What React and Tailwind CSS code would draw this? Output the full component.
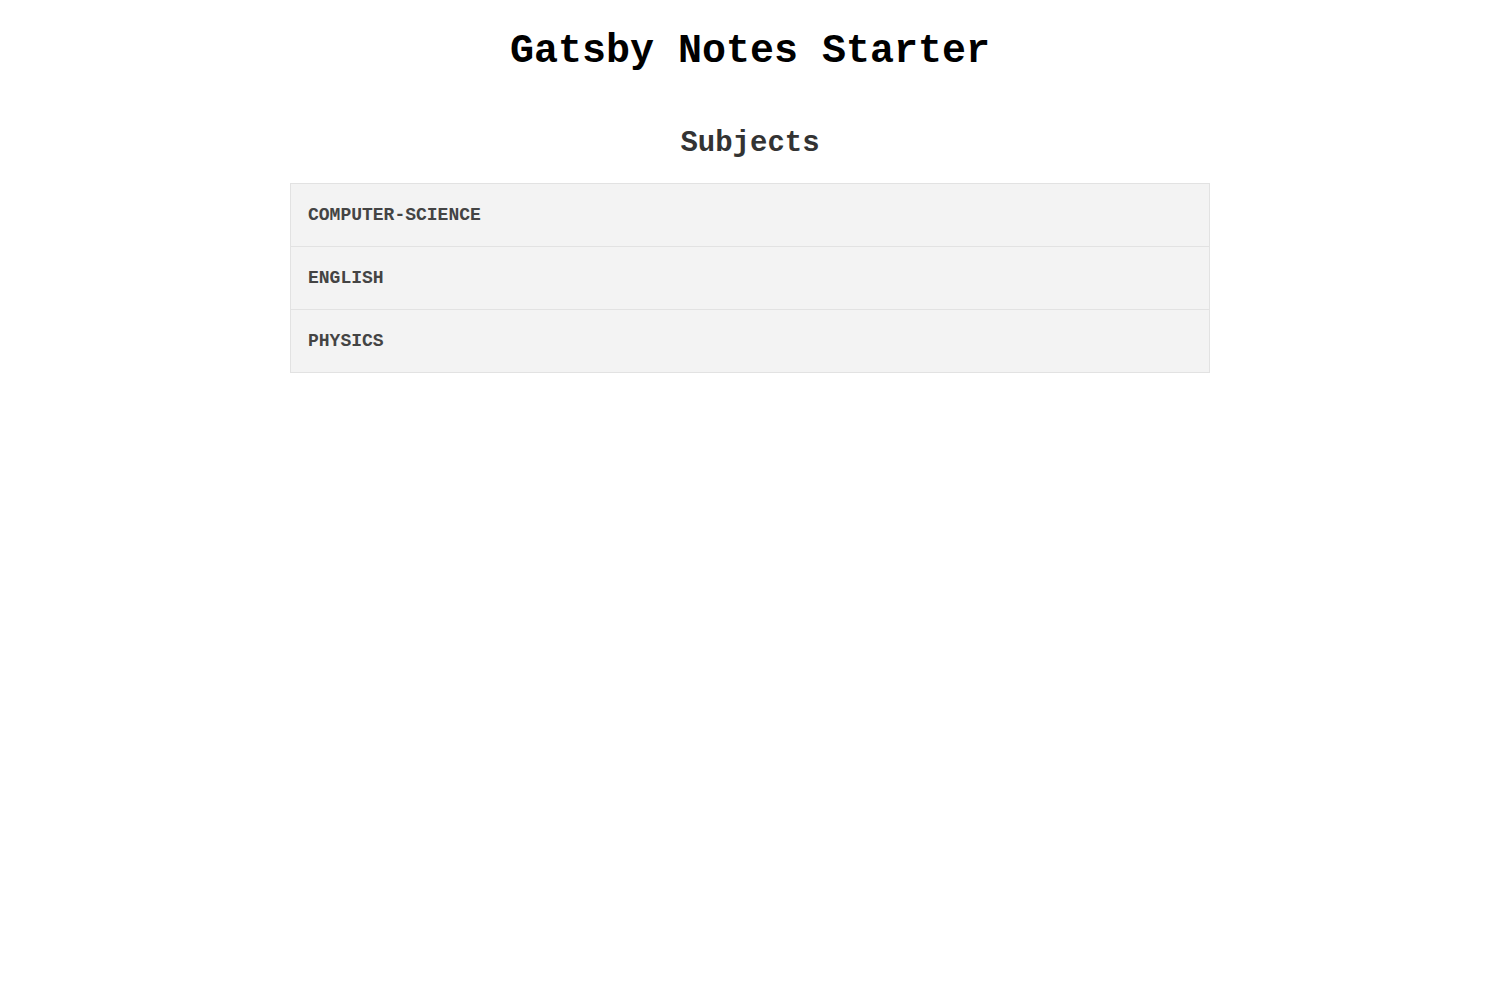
import React from 'react';

const subjects = ['computer-science', 'english', 'physics'];

export default function App() {
  return (
    <div className="min-h-screen bg-white font-['Courier_New','Nimbus_Mono_PS','FreeMono','Liberation_Mono',monospace]">
      <h1 className="pt-[27px] text-center text-[40px] font-bold leading-[50px] text-black">
        Gatsby Notes Starter
      </h1>
      <h2 className="mt-[49px] text-center text-[29px] font-bold leading-[36px] text-[#333]">
        Subjects
      </h2>
      <ul className="mx-auto mt-[21px] w-[920px] border border-[#e2e2e2] bg-[#f3f3f3]">
        {subjects.map((s, i) => (
          <li
            key={s}
            className={`flex h-[62px] items-center px-[17px] text-[18px] font-bold uppercase text-[#444] ${i > 0 ? 'h-[63px] border-t border-[#e2e2e2]' : ''}`}
          >
            {s}
          </li>
        ))}
      </ul>
    </div>
  );
}
